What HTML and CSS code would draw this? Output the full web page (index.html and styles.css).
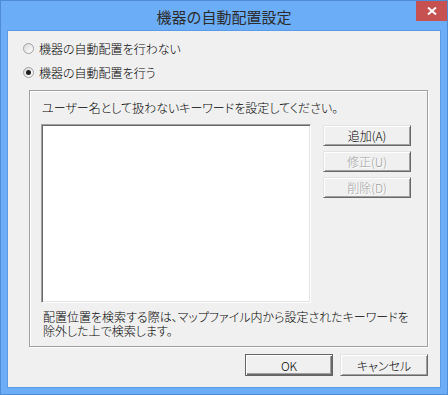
FILE: index.html
```html
<!DOCTYPE html>
<html lang="ja">
<head>
    <meta charset="UTF-8">
    <title>機器の自動配置設定</title>
    <link rel="stylesheet" href="styles.css">
</head>
<body>

    <div class="window">
        <!-- title bar -->
        <div class="titlebar">
            <span></span>
            <span class="title">機器の自動配置設定</span>
            <button class="close-btn" title="閉じる">
                <svg width="10" height="8" viewBox="0 0 10 8">
                    <path d="M1 0.5 L9 7.5 M9 0.5 L1 7.5" stroke="#fff" stroke-width="2"/>
                </svg>
            </button>
        </div>

        <div class="client">
            <div class="radio-group">
                <label class="radio-row">
                    <span class="radio"></span>
                    <span>機器の自動配置を行わない</span>
                </label>
                <label class="radio-row">
                    <span class="radio checked"></span>
                    <span>機器の自動配置を行う</span>
                </label>
            </div>

            <div class="group-box">
                <div class="group-label">ユーザー名として扱わないキーワードを設定してください。</div>
                <div class="list-row">
                    <div class="listbox"></div>
                    <div class="side-buttons">
                        <button class="btn">追加(A)</button>
                        <button class="btn" disabled>修正(U)</button>
                        <button class="btn" disabled>削除(D)</button>
                    </div>
                </div>
                <p class="hint">配置位置を検索する際は、マップファイル内から設定されたキーワードを<br>除外した上で検索します。</p>
            </div>

            <div class="footer">
                <button class="btn btn-default">OK</button>
                <button class="btn">キャンセル</button>
            </div>
        </div>
    </div>

</body>
</html>
```

FILE: styles.css
```css
body {
    margin: 0;
    font-family: "Noto Sans CJK JP", "Liberation Sans", sans-serif;
    font-size: 12px;
    font-weight: 300;
    color: #000;
}
.window {
    width: 448px;
    height: 395px;
    box-sizing: border-box;
    background-color: #6badf6;
    border: 1px solid #4f8bd6;
    display: flex;
    flex-direction: column;
}
.titlebar {
    height: 29px;
    padding: 0 6px;
    display: grid;
    grid-template-columns: 1fr auto 1fr;
    align-items: start;
}
.title {
    font-size: 15px;
    font-weight: 400;
    line-height: 29px;
    padding-top: 1px;
    color: #2b2b2b;
}
.close-btn {
    justify-self: end;
    width: 31px;
    height: 20px;
    margin-right: -6px;
    padding: 0;
    border: none;
    background-color: #c75050;
    display: flex;
    align-items: center;
    justify-content: center;
}
.client {
    flex: 1;
    margin: 0 6px 6px 6px;
    border: 1px solid #5b9be6;
    background-color: #f0f0f0;
    display: flex;
    flex-direction: column;
    font-feature-settings: "palt";
}
.radio-group {
    padding: 5px 0 0 15px;
}
.radio-row {
    display: flex;
    align-items: center;
    height: 24px;
    gap: 5px;
}
.radio {
    width: 11px;
    height: 11px;
    box-sizing: border-box;
    border-radius: 50%;
    border: 1px solid #a2a2a2;
    background: linear-gradient(135deg, #d8d8d8, #ffffff);
    display: flex;
    align-items: center;
    justify-content: center;
}
.radio.checked::after {
    content: "";
    width: 5px;
    height: 5px;
    border-radius: 50%;
    background-color: #1e1e1e;
}
.group-box {
    margin: 6px 12px 0 21px;
    height: 257px;
    box-sizing: border-box;
    border: 1px solid #a0a0a0;
    box-shadow: inset 1px 1px #fff, 1px 1px #fff;
    padding: 10px 0 0 11px;
}
.group-label {
    line-height: 14px;
    height: 14px;
    padding-left: 1px;
}
.list-row {
    display: flex;
    margin-top: 9px;
}
.listbox {
    width: 270px;
    height: 179px;
    box-sizing: border-box;
    background-color: #fff;
    border: 1px solid;
    border-color: #a0a0a0 #fff #fff #a0a0a0;
    box-shadow: inset 1px 1px #696969, inset -1px -1px #e3e3e3;
}
.side-buttons {
    margin-left: 12px;
    display: flex;
    flex-direction: column;
    gap: 5px;
    padding-top: 1px;
}
.btn {
    width: 88px;
    height: 21px;
    padding: 0;
    font-family: inherit;
    font-size: 12px;
    font-weight: 300;
    font-feature-settings: "palt";
    color: #000;
    background-color: #f0f0f0;
    border: 1px solid;
    border-color: #e3e3e3 #696969 #696969 #e3e3e3;
    box-shadow: inset 1px 1px #fff, inset -1px -1px #a0a0a0;
}
.btn:disabled {
    color: #a0a0a0;
    text-shadow: 1px 1px #fff;
}
.btn-default {
    border-color: #646464;
    box-shadow: inset 1px 1px #fff, inset -1px -1px #696969, inset -2px -2px #a0a0a0;
}
.hint {
    margin: 7px 0 0 2px;
    line-height: 14px;
}
.footer {
    display: flex;
    justify-content: flex-end;
    gap: 7px;
    margin-top: 7px;
    padding-right: 12px;
}
.footer .btn {
    height: 22px;
}
```
